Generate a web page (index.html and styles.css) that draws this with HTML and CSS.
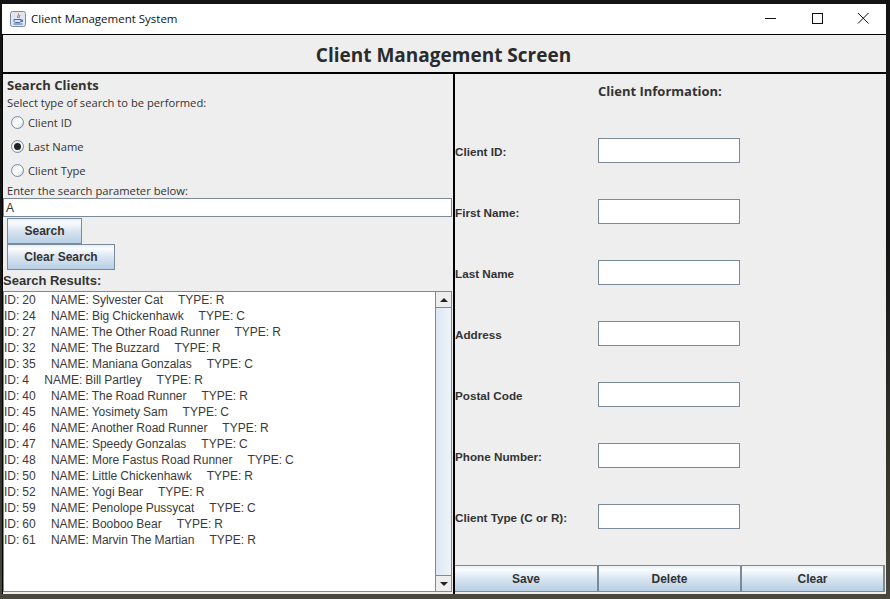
FILE: index.html
```html
<!DOCTYPE html>
<html lang="en">
<head>
  <meta charset="UTF-8" />
  <title>Client Management System</title>
  <link rel="stylesheet" href="styles.css">
</head>
<body>

  <div class="window">
    <div class="titlebar">
      <svg class="app-icon" viewBox="0 0 16 16" width="16" height="16">
        <rect x="0.5" y="0.5" width="15" height="15" rx="2" fill="#dfe6f2" stroke="#7d8aa6"/>
        <path d="M8.500 2.500c1 1.500-2 2.500-.5 4.500M10 4c0 1-1.500 1.500-.8 3" fill="none" stroke="#d2502a" stroke-width="1"/>
        <path d="M4 8.500h7v1.500c0 1-1 1.500-2 1.500H6c-1 0-2-.5-2-1.500zM11 9h1.500v1.500H11" fill="none" stroke="#3c6aa8" stroke-width="1"/>
        <path d="M3.500 13h9" stroke="#3c6aa8" stroke-width="1"/>
      </svg>
      <span class="window-title">Client Management System</span>
      <div class="window-btns">
        <svg viewBox="0 0 46 30" width="46" height="30"><path d="M17 14.500h11" stroke="#111" stroke-width="1"/></svg>
        <svg viewBox="0 0 46 30" width="46" height="30"><rect x="18.500" y="9.500" width="10" height="10" fill="none" stroke="#111" stroke-width="1"/></svg>
        <svg viewBox="0 0 46 30" width="46" height="30"><path d="M18 9l10.500 10.500M28.500 9L18 19.500" stroke="#111" stroke-width="1" fill="none"/></svg>
      </div>
    </div>

    <div class="frame">
      <h1 class="screen-title">Client Management Screen</h1>

      <div class="panels">
        <div class="search-panel">
          <div class="search-top">
            <h2>Search Clients</h2>
            <p>Select type of search to be performed:</p>
            <label class="radio-row"><span class="radio"></span>Client ID</label>
            <label class="radio-row"><span class="radio checked"></span>Last Name</label>
            <label class="radio-row"><span class="radio"></span>Client Type</label>
            <p class="param-label">Enter the search parameter below:</p>
          </div>
          <div class="search-input">A</div>
          <button class="btn btn-search">Search</button>
          <button class="btn btn-clear-search">Clear Search</button>
          <h3>Search Results:</h3>

          <div class="results">
            <div class="results-list">
              <div>ID: 20     NAME: Sylvester Cat     TYPE: R</div>
              <div>ID: 24     NAME: Big Chickenhawk     TYPE: C</div>
              <div>ID: 27     NAME: The Other Road Runner     TYPE: R</div>
              <div>ID: 32     NAME: The Buzzard     TYPE: R</div>
              <div>ID: 35     NAME: Maniana Gonzalas     TYPE: C</div>
              <div>ID: 4     NAME: Bill Partley     TYPE: R</div>
              <div>ID: 40     NAME: The Road Runner     TYPE: R</div>
              <div>ID: 45     NAME: Yosimety Sam     TYPE: C</div>
              <div>ID: 46     NAME: Another Road Runner     TYPE: R</div>
              <div>ID: 47     NAME: Speedy Gonzalas     TYPE: C</div>
              <div>ID: 48     NAME: More Fastus Road Runner     TYPE: C</div>
              <div>ID: 50     NAME: Little Chickenhawk     TYPE: R</div>
              <div>ID: 52     NAME: Yogi Bear     TYPE: R</div>
              <div>ID: 59     NAME: Penolope Pussycat     TYPE: C</div>
              <div>ID: 60     NAME: Booboo Bear     TYPE: R</div>
              <div>ID: 61     NAME: Marvin The Martian     TYPE: R</div>
            </div>
            <div class="scrollbar">
              <div class="scroll-btn"><span class="arrow-up"></span></div>
              <div class="scroll-track"></div>
              <div class="scroll-btn"><span class="arrow-down"></span></div>
            </div>
          </div>
        </div>

        <div class="info-panel">
          <h2 class="info-title">Client Information:</h2>
          <div class="info-fields">
            <div class="field"><label>Client ID:</label><div class="text-box"></div></div>
            <div class="field"><label>First Name:</label><div class="text-box"></div></div>
            <div class="field"><label>Last Name</label><div class="text-box"></div></div>
            <div class="field"><label>Address</label><div class="text-box"></div></div>
            <div class="field"><label>Postal Code</label><div class="text-box"></div></div>
            <div class="field"><label>Phone Number:</label><div class="text-box"></div></div>
            <div class="field"><label>Client Type (C or R):</label><div class="text-box"></div></div>
          </div>
          <div class="actions">
            <button class="btn">Save</button>
            <button class="btn">Delete</button>
            <button class="btn">Clear</button>
          </div>
        </div>
      </div>
    </div>
  </div>

</body>
</html>
```

FILE: styles.css
```css
html, body {
  height: 599px;
  overflow: hidden;
}

body {
  margin: 0;
  background: linear-gradient(#141414 0, #141414 40%, #4a473c 100%);
  font-family: "Liberation Sans", sans-serif;
  color: #333;
}

.window {
  margin: 4px 4px 0 2px;
  width: 884px;
  height: 590px;
  display: flex;
  flex-direction: column;
  background: #eee;
}

.titlebar {
  height: 30px;
  flex: none;
  display: flex;
  align-items: center;
  background: white;
  padding-left: 8px;
  box-sizing: border-box;
}

.app-icon {
  margin-right: 5px;
}

.window-title {
  font-family: "Open Sans", sans-serif;
  font-size: 11.5px;
  color: #111;
  margin-bottom: 2px;
}

.window-btns {
  margin-left: auto;
  display: flex;
}

.frame {
  flex: 1;
  display: flex;
  flex-direction: column;
  border-top: 1px solid black;
  border-left: 1px solid black;
  min-height: 0;
}

.screen-title {
  margin: 0;
  height: 39px;
  flex: none;
  box-sizing: border-box;
  border-bottom: 2px solid black;
  padding: 3px 2px 0 0;
  font-family: "Open Sans", sans-serif;
  font-size: 19px;
  font-weight: bold;
  line-height: 34px;
  text-align: center;
  color: #2b2b2b;
}

.panels {
  flex: 1;
  display: flex;
  min-height: 0;
}

.search-panel {
  width: 449px;
  flex: none;
  display: flex;
  flex-direction: column;
  align-items: flex-start;
  padding-right: 1px;
  border-right: 2px solid black;
}

.search-top {
  padding-left: 4px;
}

.search-top h2 {
  margin: 2px 0 0;
  font-family: "Open Sans", sans-serif;
  font-size: 13px;
  line-height: 19px;
  height: 20px;
  color: #333;
}

.search-top p {
  margin: 0;
  font-family: "Open Sans", sans-serif;
  font-size: 11.2px;
  line-height: 14px;
}

.radio-row {
  display: flex;
  align-items: center;
  height: 24px;
  font-family: "Open Sans", sans-serif;
  font-size: 11.2px;
  padding-left: 4px;
}

.radio {
  width: 11px;
  height: 11px;
  margin-right: 4px;
  border: 1px solid #7a8a99;
  border-radius: 50%;
  background: linear-gradient(135deg, #dfe8f2, #ffffff 60%, #b8cfe5);
  position: relative;
}

.radio.checked::after {
  content: "";
  position: absolute;
  left: 2px;
  top: 2px;
  width: 7px;
  height: 7px;
  border-radius: 50%;
  background: #222;
}

.search-top .param-label {
  margin-top: 2px;
}

.search-input {
  width: 100%;
  height: 19px;
  box-sizing: border-box;
  border: 1px solid #7a8a99;
  background: white;
  font-size: 12px;
  line-height: 18px;
  padding-left: 2px;
}

.btn {
  height: 26px;
  padding: 0;
  font-family: "Liberation Sans", sans-serif;
  font-size: 12px;
  font-weight: bold;
  color: #333;
  border: 1px solid #7a8a99;
  background: linear-gradient(#e6eff7, #fbfdfe 15%, #d9e5f1 50%, #b8cfe5);
}

.btn-search {
  width: 75px;
  margin: 1px 0 0 4px;
}

.btn-clear-search {
  width: 108px;
  margin-left: 4px;
}

h3 {
  margin: 0;
  height: 21px;
  line-height: 22px;
  font-size: 13px;
  font-weight: bold;
  color: #333;
}

.results {
  flex: 1;
  width: 100%;
  display: flex;
  min-height: 0;
  box-sizing: border-box;
  border: 1px solid #7a8a99;
  background: white;
  margin-bottom: 2px;
}

.results-list {
  flex: 1;
  font-size: 12px;
  line-height: 16px;
  word-spacing: -0.3px;
  color: #3a3a3a;
}

.results-list div {
  white-space: pre;
}

.scrollbar {
  width: 15px;
  display: flex;
  flex-direction: column;
  border-left: 1px solid #7a8a99;
  background: #eee;
}

.scroll-btn {
  height: 15px;
  flex: none;
  display: flex;
  align-items: center;
  justify-content: center;
  background: #eee;
}

.scroll-track {
  flex: 1;
  border-top: 1px solid #7a8a99;
  border-bottom: 1px solid #7a8a99;
  background: linear-gradient(90deg, #dde8f3, #eef3f8);
}

.arrow-up {
  border: 4px solid transparent;
  border-top: 0;
  border-bottom: 4px solid #222;
}

.arrow-down {
  border: 4px solid transparent;
  border-bottom: 0;
  border-top: 4px solid #222;
}

.info-panel {
  flex: 1;
  display: flex;
  flex-direction: column;
  min-width: 0;
}

.info-title {
  margin: 9px 0 0 143px;
  font-family: "Open Sans", sans-serif;
  font-size: 13px;
  line-height: 16px;
  color: #333;
}

.info-fields {
  flex: 1;
  padding-top: 39px;
  display: flex;
  flex-direction: column;
  gap: 36px;
}

.field {
  display: grid;
  grid-template-columns: 143px 142px;
  align-items: center;
}

.field label {
  padding-top: 2px;
  font-size: 11.7px;
  font-weight: bold;
  color: #333;
}

.text-box {
  height: 25px;
  box-sizing: border-box;
  border: 1px solid #7a8a99;
  background: white;
}

.actions {
  display: grid;
  grid-template-columns: 144px 143px 143px;
  height: 27px;
  margin-bottom: 2px;
}

.actions .btn {
  height: 27px;
  border-left: 0;
  border-right: 2px solid #7a8a99;
}
```
